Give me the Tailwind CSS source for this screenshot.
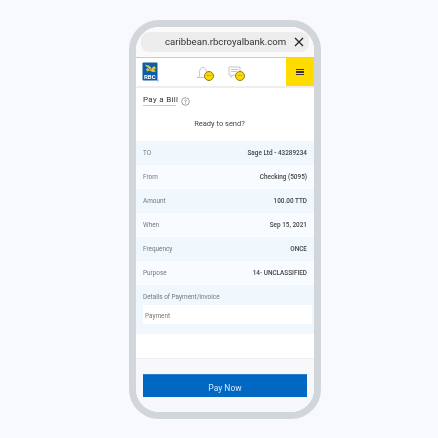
<!DOCTYPE html>
<html>
  <head>
    <meta charset="utf-8" />
    <title>Pay a Bill</title>
    <script src="https://cdn.jsdelivr.net/npm/@tailwindcss/browser@4"></script>
  </head>
  <body>
    <div class="w-[438px] h-[438px] bg-[#f7f9fc] pt-[20px] pl-[129px] overflow-hidden" style='font-family: Roboto, "Liberation Sans", sans-serif;'>
      <!-- Phone frame -->
      <div class="w-[192px] h-[399px] border-[7px] border-[#d0d6da] rounded-[30px] bg-white overflow-hidden flex flex-col will-change-transform">
        <!-- Browser bar -->
        <div class="h-[31px] shrink-0 border-b border-[#c9cbcc] bg-[#fafafa] px-[5px] pt-[5px]">
          <div class="h-[20px] rounded-[8px] bg-[#ededed] flex items-center pl-[24px] pr-[5px] justify-between">
            <span class="text-[9.6px] text-[#333] whitespace-nowrap">caribbean.rbcroyalbank.com</span>
            <svg class="w-[10px] h-[10px] shrink-0" viewBox="0 0 10 10" fill="none" stroke="#222" stroke-width="1.2"><path d="M1 1l8 8M9 1l-8 8"></path></svg>
          </div>
        </div>
        <!-- Header -->
        <div class="h-[28px] shrink-0 flex items-stretch">
          <div class="w-[49px] pl-[6px] pt-[4px]">
            <div class="relative w-[17px] h-[20px]">
              <svg class="w-[17px] h-[20px]" viewBox="0 0 17 20">
                <path d="M0.500 1.500q0-1 1-1h13q1 0 1 1v17h-14q-1 0-1-1z" fill="#0b5cab"></path>
                <path d="M2.500 2.500l4.500 1 2.500 2.500 3-2 1.500 2.500-2 1 2 2-3.500.5-3-1.500-2.500 1-1-2.500 2-1z" fill="#d9c63f"></path>
                <path d="M5 5l3 3M10 4l-1 4" stroke="#0b5cab" stroke-width="0.6" fill="none"></path>
                <rect x="15" y="17.500" width="2" height="2" fill="#a8c4e0"></rect>
              </svg>
              <span class="absolute left-[2px] top-[12px] text-[6px] leading-[6px] font-bold text-white">RBC</span>
            </div>
          </div>
          <div class="flex-1 flex gap-[18px] pl-[11px] pt-[8px]">
            <div class="relative w-[14px] h-[14px]">
              <svg class="w-[14px] h-[14px]" viewBox="0 0 14 14" fill="none" stroke="#b8b8b8" stroke-width="0.8"><path d="M1 11.500h9M2.500 11.500c1.500-1.500 1-3 1-5.500 0-2.500 1.500-4.500 3.500-4.500s3.500 2 3.500 4.500"></path></svg>
              <div class="absolute left-[8px] top-[5px] w-[10px] h-[10px] rounded-full bg-[#fbd800] border border-[#8a7a20] flex items-center justify-center text-[4px] leading-none text-[#555]">•••</div>
            </div>
            <div class="relative w-[14px] h-[14px]">
              <svg class="w-[14px] h-[14px]" viewBox="0 0 14 14" fill="none" stroke="#b8b8b8" stroke-width="0.8"><path d="M1 1h11v8h-7l-2 2.500v-2.500h-2zM3 3.500h7M3 5.500h6"></path></svg>
              <div class="absolute left-[7px] top-[5px] w-[10px] h-[10px] rounded-full bg-[#fbd800] border border-[#8a7a20] flex items-center justify-center text-[4px] leading-none text-[#555]">•••</div>
            </div>
          </div>
          <div class="w-[28px] bg-[#ffdc00] flex flex-col items-center justify-center gap-[1px]">
            <div class="w-[8px] h-[1.5px] bg-[#333]"></div>
            <div class="w-[8px] h-[1.5px] bg-[#333]"></div>
            <div class="w-[8px] h-[1.5px] bg-[#333]"></div>
          </div>
        </div>
        <div class="h-[2px] shrink-0 bg-[#eeeeee]"></div>
        <!-- Title -->
        <div class="h-[22px] shrink-0 pl-[7px] flex items-start pt-[7px] gap-[4px]">
          <span class="text-[8px] leading-[10px] tracking-[0.3px] text-[#333] border-b border-[#ffd400] w-[33px] whitespace-nowrap">Pay a Bill</span>
          <svg class="w-[9px] h-[9px] mt-[2px] ml-[1px]" viewBox="0 0 9 9" fill="none" stroke="#777" stroke-width="0.7"><circle cx="4.500" cy="4.500" r="3.800"></circle><path d="M3.500 3.500q1-1.200 2 0q0 .8-1 1.200v1M4.500 6.500v.6"></path></svg>
        </div>
        <div class="h-[31px] shrink-0 text-center text-[7.500px] leading-[28px] text-[#444] pr-[11px]">Ready to send?</div>
        <!-- Rows -->
        <div class="text-[6.400px] shrink-0">
          <div class="h-[24px] pt-[1px] bg-[#f0f7fd] flex items-center justify-between px-[7px]"><span class="text-[#777]">TO</span><span class="text-[#444] font-medium">Sage Ltd - 43289234</span></div>
          <div class="h-[24px] pt-[1px] bg-[#f8fbff] flex items-center justify-between px-[7px]"><span class="text-[#777]">From</span><span class="text-[#444] font-medium">Checking (5095)</span></div>
          <div class="h-[24px] pt-[1px] bg-[#f0f7fd] flex items-center justify-between px-[7px]"><span class="text-[#777]">Amount</span><span class="text-[#444] font-medium">100.00 TTD</span></div>
          <div class="h-[24px] pt-[1px] bg-[#f8fbff] flex items-center justify-between px-[7px]"><span class="text-[#777]">When</span><span class="text-[#444] font-medium">Sep 15, 2021</span></div>
          <div class="h-[24px] pt-[1px] bg-[#f0f7fd] flex items-center justify-between px-[7px]"><span class="text-[#777]">Frequency</span><span class="text-[#444] font-medium">ONCE</span></div>
          <div class="h-[24px] pt-[1px] bg-[#f8fbff] flex items-center justify-between px-[7px]"><span class="text-[#777]">Purpose</span><span class="text-[#444] font-medium">14- UNCLASSIFIED</span></div>
          <div class="h-[49px] bg-[#f0f7fd] pl-[7px] pr-[2px] pt-[8px]">
            <div class="text-[#777] leading-[8px] h-[12px]">Details of Payment/Invoice</div>
            <div class="h-[19px] pt-[4px] bg-white pl-[2px] flex items-center text-[#777]">Payment</div>
          </div>
        </div>
        <div class="h-[24px] shrink-0 bg-white"></div>
        <!-- Footer -->
        <div class="flex-1 bg-[#f6f8fb] border-t border-[#eeeeee] px-[7px] pt-[15px]">
          <div class="h-[23px] bg-[#0067c2] border-t border-[#2a80cc] flex items-center justify-center text-[8.500px] text-[#dbe8f5] pt-[5px]">Pay Now</div>
        </div>
      </div>
    </div>
  </body>
</html>
